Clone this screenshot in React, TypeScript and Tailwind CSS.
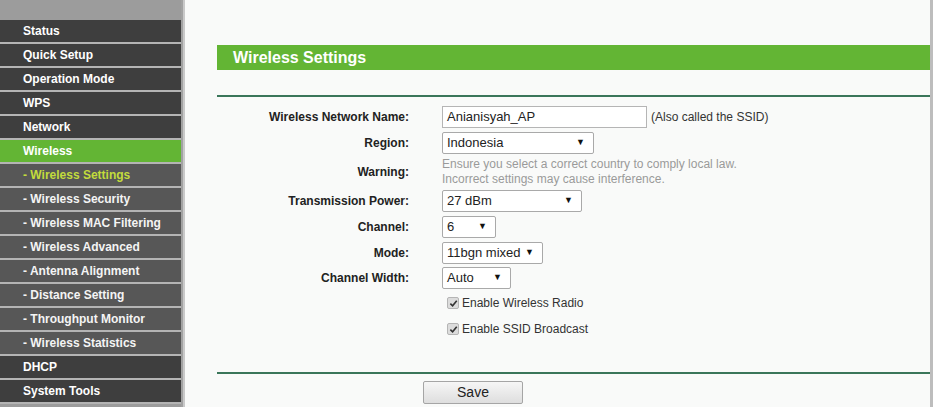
import React from "react"

const menu: { label: string; kind: "main" | "sub" | "active" | "current" }[] = [
  { label: "Status", kind: "main" },
  { label: "Quick Setup", kind: "main" },
  { label: "Operation Mode", kind: "main" },
  { label: "WPS", kind: "main" },
  { label: "Network", kind: "main" },
  { label: "Wireless", kind: "active" },
  { label: "- Wireless Settings", kind: "current" },
  { label: "- Wireless Security", kind: "sub" },
  { label: "- Wireless MAC Filtering", kind: "sub" },
  { label: "- Wireless Advanced", kind: "sub" },
  { label: "- Antenna Alignment", kind: "sub" },
  { label: "- Distance Setting", kind: "sub" },
  { label: "- Throughput Monitor", kind: "sub" },
  { label: "- Wireless Statistics", kind: "sub" },
  { label: "DHCP", kind: "main" },
  { label: "System Tools", kind: "main" },
]

const Select = ({ value, width }: { value: string; width: string }) => (
  <div className={`${width} h-[22px] flex items-center justify-between border border-[#a9a9a9] bg-white rounded-[2px] pl-[4px] pr-[8px] text-[13px] text-[#222]`}>
    <span>{value}</span>
    <span className="text-[9px] text-[#111]">▼</span>
  </div>
)

const Check = ({ label }: { label: string }) => (
  <div className="flex items-center gap-[3px] pl-[5px]">
    <span className="w-[12px] h-[12px] rounded-[2px] border border-[#b5b5b5] bg-[#dcdcdc] flex items-center justify-center">
      <svg width="9" height="9" viewBox="0 0 10 10">
        <path d="M1.5 5.2 L4 7.6 L8.6 2" stroke="#333" strokeWidth="1.8" fill="none" />
      </svg>
    </span>
    <span className="text-[12px] text-[#333]">{label}</span>
  </div>
)

const Row = ({ label, h = "h-[26px]", children }: { label: string; h?: string; children: React.ReactNode }) => (
  <div className={`flex items-center ${h}`}>
    <div className="w-[192px] text-right font-bold text-[12px] text-[#222]">{label}</div>
    <div className="ml-[33px] flex items-center">{children}</div>
  </div>
)

export default function App() {
  return (
    <div className="w-[933px] h-[407px] flex overflow-hidden font-['Liberation_Sans',Arial,sans-serif]">
      <div className="w-[181px] shrink-0 bg-[#9c9c9c] flex flex-col pt-[20px]">
        {menu.map((m) => (
          <div
            key={m.label}
            className={`h-[24px] border-b-2 border-[#b4b4b4] flex items-center font-bold text-[12px] ${
              m.kind === "main"
                ? "bg-[#3e3e3e] text-white pl-[23px]"
                : m.kind === "active"
                ? "bg-[#63b534] text-white pl-[23px]"
                : m.kind === "current"
                ? "bg-[#575757] text-[#c3dc3c] pl-[23px]"
                : "bg-[#575757] text-[#f4f4f4] pl-[23px]"
            }`}
          >
            {m.label}
          </div>
        ))}
      </div>
      <div className="w-[4px] shrink-0 bg-[#c9c9c9] border-l-2 border-[#a2a2a2]" />
      <div className="flex-1 bg-[#f9faf9] pl-[32px] pt-[45px] flex flex-col">
        <div className="h-[25px] bg-[#63b534] flex items-center pl-[16px] text-white font-bold text-[16px]">
          Wireless Settings
        </div>
        <div className="mt-[25px] h-[2px] bg-[#3a765a]" />
        <div className="mt-[6px] flex flex-col">
          <Row label="Wireless Network Name:" h="h-[27px]">
            <div className="w-[205px] h-[22px] border border-[#b5b5b5] bg-white pl-[4px] flex items-center text-[13px] text-[#222]">
              Anianisyah_AP
            </div>
            <span className="ml-[4px] text-[12px] text-[#333]">(Also called the SSID)</span>
          </Row>
          <Row label="Region:">
            <Select value="Indonesia" width="w-[152px]" />
          </Row>
          <Row label="Warning:" h="h-[32px]">
            <div className="text-[12px] leading-[15px] text-[#9a9a9a]">
              <div>Ensure you select a correct country to comply local law.</div>
              <div>Incorrect settings may cause interference.</div>
            </div>
          </Row>
          <Row label="Transmission Power:">
            <Select value="27 dBm" width="w-[140px]" />
          </Row>
          <Row label="Channel:">
            <Select value="6" width="w-[54px]" />
          </Row>
          <Row label="Mode:">
            <Select value="11bgn mixed" width="w-[101px]" />
          </Row>
          <Row label="Channel Width:" h="h-[24px]">
            <Select value="Auto" width="w-[69px]" />
          </Row>
          <Row label="">
            <Check label="Enable Wireless Radio" />
          </Row>
          <Row label="">
            <Check label="Enable SSID Broadcast" />
          </Row>
        </div>
        <div className="mt-[30px] h-[2px] bg-[#3a765a]" />
        <div className="mt-[6px] pl-[206px]">
          <button className="w-[100px] h-[23px] border border-[#a5a5a5] rounded-[2px] bg-gradient-to-b from-[#f6f6f6] to-[#dedede] text-[14px] text-[#222]">
            Save
          </button>
        </div>
      </div>
      <div className="w-[3px] shrink-0 bg-[#bdbdbd]" />
    </div>
  )
}
